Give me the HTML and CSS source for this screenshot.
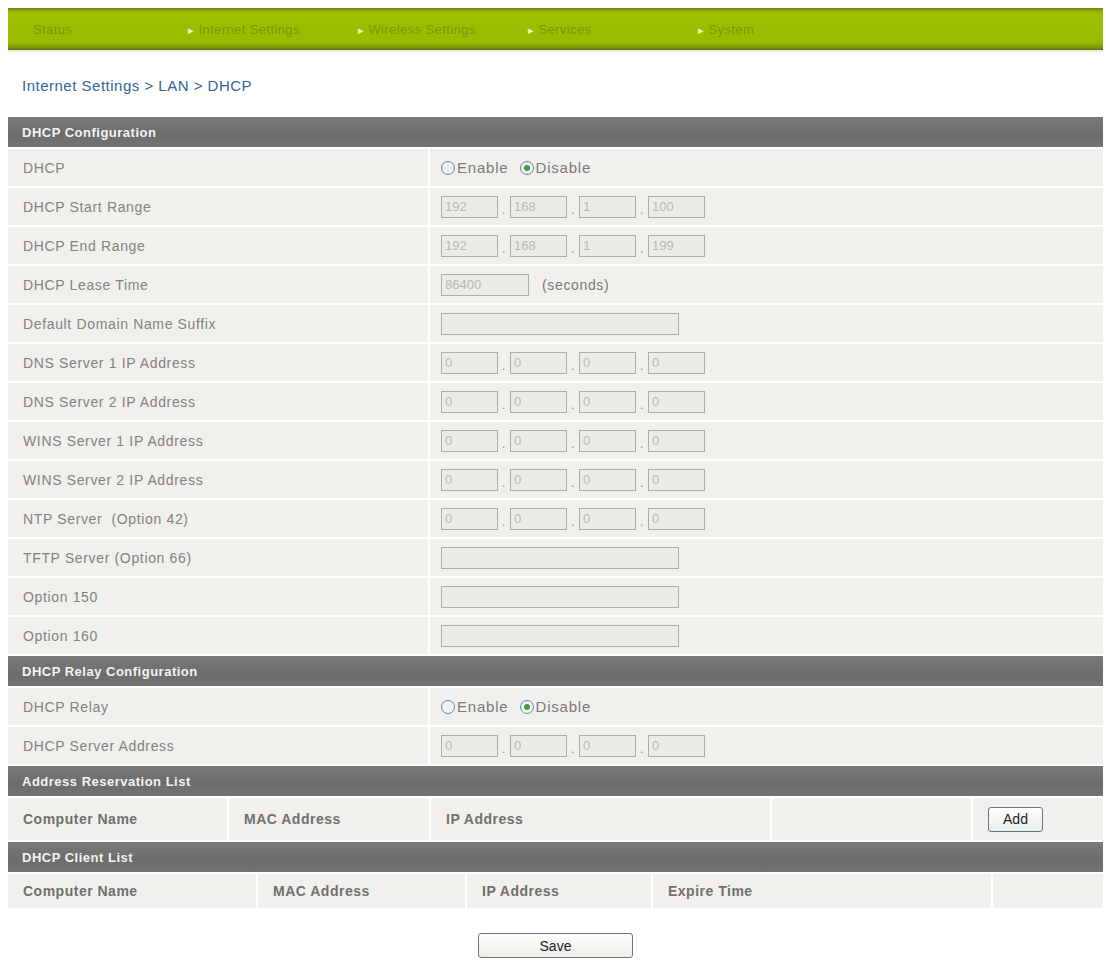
FILE: index.html
```html
<!DOCTYPE html>
<html lang="en">
<head>
  <meta charset="UTF-8">
  <title>DHCP</title>
  <link rel="stylesheet" href="styles.css">
</head>
<body>
  <div class="nav">
    <a class="nav-item first">Status</a>
    <a class="nav-item"><span class="nav-arrow">&#9656;</span>Internet Settings</a>
    <a class="nav-item"><span class="nav-arrow">&#9656;</span>Wireless Settings</a>
    <a class="nav-item"><span class="nav-arrow">&#9656;</span>Services</a>
    <a class="nav-item"><span class="nav-arrow">&#9656;</span>System</a>
  </div>

  <div class="breadcrumb">Internet Settings &gt; LAN &gt; DHCP</div>

  <div class="panel">
    <div class="section-head">DHCP Configuration</div>
    <div class="form-row">
      <div class="label">DHCP</div>
      <div class="value">
        <span class="radio"></span><span class="radio-text">Enable</span>
        <span class="radio checked"></span><span class="radio-text">Disable</span>
      </div>
    </div>
    <div class="form-row">
      <div class="label">DHCP Start Range</div>
      <div class="value ip"><input class="octet" value="192" disabled><span class="dot">.</span><input class="octet" value="168" disabled><span class="dot">.</span><input class="octet" value="1" disabled><span class="dot">.</span><input class="octet" value="100" disabled></div>
    </div>
    <div class="form-row">
      <div class="label">DHCP End Range</div>
      <div class="value ip"><input class="octet" value="192" disabled><span class="dot">.</span><input class="octet" value="168" disabled><span class="dot">.</span><input class="octet" value="1" disabled><span class="dot">.</span><input class="octet" value="199" disabled></div>
    </div>
    <div class="form-row">
      <div class="label">DHCP Lease Time</div>
      <div class="value"><input class="lease" value="86400" disabled><span class="unit">(seconds)</span></div>
    </div>
    <div class="form-row">
      <div class="label">Default Domain Name Suffix</div>
      <div class="value"><input class="wide" disabled></div>
    </div>
    <div class="form-row">
      <div class="label">DNS Server 1 IP Address</div>
      <div class="value ip"><input class="octet" value="0" disabled><span class="dot">.</span><input class="octet" value="0" disabled><span class="dot">.</span><input class="octet" value="0" disabled><span class="dot">.</span><input class="octet" value="0" disabled></div>
    </div>
    <div class="form-row">
      <div class="label">DNS Server 2 IP Address</div>
      <div class="value ip"><input class="octet" value="0" disabled><span class="dot">.</span><input class="octet" value="0" disabled><span class="dot">.</span><input class="octet" value="0" disabled><span class="dot">.</span><input class="octet" value="0" disabled></div>
    </div>
    <div class="form-row">
      <div class="label">WINS Server 1 IP Address</div>
      <div class="value ip"><input class="octet" value="0" disabled><span class="dot">.</span><input class="octet" value="0" disabled><span class="dot">.</span><input class="octet" value="0" disabled><span class="dot">.</span><input class="octet" value="0" disabled></div>
    </div>
    <div class="form-row">
      <div class="label">WINS Server 2 IP Address</div>
      <div class="value ip"><input class="octet" value="0" disabled><span class="dot">.</span><input class="octet" value="0" disabled><span class="dot">.</span><input class="octet" value="0" disabled><span class="dot">.</span><input class="octet" value="0" disabled></div>
    </div>
    <div class="form-row">
      <div class="label">NTP Server &nbsp;(Option 42)</div>
      <div class="value ip"><input class="octet" value="0" disabled><span class="dot">.</span><input class="octet" value="0" disabled><span class="dot">.</span><input class="octet" value="0" disabled><span class="dot">.</span><input class="octet" value="0" disabled></div>
    </div>
    <div class="form-row">
      <div class="label">TFTP Server (Option 66)</div>
      <div class="value"><input class="wide" disabled></div>
    </div>
    <div class="form-row">
      <div class="label">Option 150</div>
      <div class="value"><input class="wide" disabled></div>
    </div>
    <div class="form-row">
      <div class="label">Option 160</div>
      <div class="value"><input class="wide" disabled></div>
    </div>

    <div class="section-head">DHCP Relay Configuration</div>
    <div class="form-row">
      <div class="label">DHCP Relay</div>
      <div class="value">
        <span class="radio"></span><span class="radio-text">Enable</span>
        <span class="radio checked"></span><span class="radio-text">Disable</span>
      </div>
    </div>
    <div class="form-row">
      <div class="label">DHCP Server Address</div>
      <div class="value ip"><input class="octet" value="0" disabled><span class="dot">.</span><input class="octet" value="0" disabled><span class="dot">.</span><input class="octet" value="0" disabled><span class="dot">.</span><input class="octet" value="0" disabled></div>
    </div>

    <div class="section-head">Address Reservation List</div>
    <div class="list-row reservation">
      <div class="cell">Computer Name</div>
      <div class="cell">MAC Address</div>
      <div class="cell">IP Address</div>
      <div class="cell"></div>
      <div class="cell"><button class="btn add-btn">Add</button></div>
    </div>

    <div class="section-head">DHCP Client List</div>
    <div class="list-row clients">
      <div class="cell">Computer Name</div>
      <div class="cell">MAC Address</div>
      <div class="cell">IP Address</div>
      <div class="cell">Expire Time</div>
      <div class="cell"></div>
    </div>
  </div>

  <div class="actions">
    <button class="btn save-btn">Save</button>
  </div>
</body>
</html>
```

FILE: styles.css
```css
* {
  box-sizing: border-box;
}

body {
  margin: 8px 3px 0 8px;
  font-family: "Liberation Sans", Arial, sans-serif;
  background: #ffffff;
  color: #777777;
}

/* top menu */
.nav {
  display: flex;
  align-items: center;
  height: 42px;
  background: linear-gradient(#6d7f1c 0px, #86a30a 2px, #9dbf00 5px, #9abc00 34px, #7f9a07 39px, #5e6f17 42px);
  box-shadow: 0 2px 3px rgba(150, 170, 60, 0.25);
}

.nav-item {
  width: 170px;
  font-size: 13px;
  letter-spacing: 0.4px;
  color: #7a980f;
  padding-left: 10px;
}

.nav-item.first {
  padding-left: 25px;
}

.nav-arrow {
  color: #f4f7c8;
  font-size: 11px;
  margin-right: 4px;
}

.breadcrumb {
  margin: 27px 0 0 14px;
  font-size: 15px;
  letter-spacing: 0.5px;
  color: #33659b;
  height: 40px;
}

/* settings panel */
.panel {
  display: flex;
  flex-direction: column;
  gap: 2px;
}

.section-head {
  height: 30px;
  padding: 0 14px;
  display: flex;
  align-items: center;
  font-size: 13px;
  font-weight: bold;
  letter-spacing: 0.5px;
  color: #f4f4f4;
  background: linear-gradient(#7a7a78, #6c6c6a 60%, #737371);
}

.form-row {
  display: grid;
  grid-template-columns: 420px 1fr;
  gap: 2px;
  height: 37px;
}

.label,
.value {
  background: #f1f0ec;
  display: flex;
  align-items: center;
  font-size: 14px;
  letter-spacing: 0.65px;
}

.label {
  padding-left: 15px;
  color: #828282;
}

.value {
  padding-left: 11px;
}

.radio {
  width: 14px;
  height: 14px;
  border: 1.5px solid #6d86a3;
  border-radius: 50%;
  background: #eef3f7;
  display: inline-flex;
  align-items: center;
  justify-content: center;
}

.radio.checked::after {
  content: "";
  width: 6px;
  height: 6px;
  border-radius: 50%;
  background: #4a9a3c;
}

.radio-text {
  font-size: 15px;
  letter-spacing: 0.8px;
  color: #7a7a7a;
  margin: 0 11px 0 2px;
}

input {
  font-family: inherit;
  font-size: 13px;
  height: 22px;
  border: 1px solid #a6aeae;
  background: #ecece6;
  color: #b8b8b8;
  padding: 0 3px;
}

.octet {
  width: 57px;
}

.dot {
  width: 12px;
  text-align: center;
  color: #888888;
  font-size: 12px;
  align-self: flex-end;
  padding-bottom: 8px;
}

.lease {
  width: 88px;
}

.unit {
  margin-left: 13px;
  color: #777777;
}

.wide {
  width: 238px;
}

/* lists */
.list-row {
  display: grid;
  gap: 2px;
  height: 42px;
}

.list-row.reservation {
  grid-template-columns: 219px 200px 339px 199px 1fr;
}

.list-row.clients {
  grid-template-columns: 248px 207px 184px 338px 1fr;
  height: 34px;
}

.cell {
  background: #f1f0ec;
  display: flex;
  align-items: center;
  padding-left: 15px;
  font-size: 14px;
  font-weight: bold;
  letter-spacing: 0.5px;
  color: #707070;
}

.btn {
  font-family: inherit;
  font-size: 14px;
  color: #222222;
  background: linear-gradient(#ffffff, #ecece8);
  border: 1px solid #657788;
  border-radius: 3px;
  cursor: pointer;
}

.add-btn {
  width: 55px;
  height: 25px;
  font-weight: normal;
}

.actions {
  display: flex;
  justify-content: center;
  margin-top: 25px;
}

.save-btn {
  width: 155px;
  height: 25px;
}
```
